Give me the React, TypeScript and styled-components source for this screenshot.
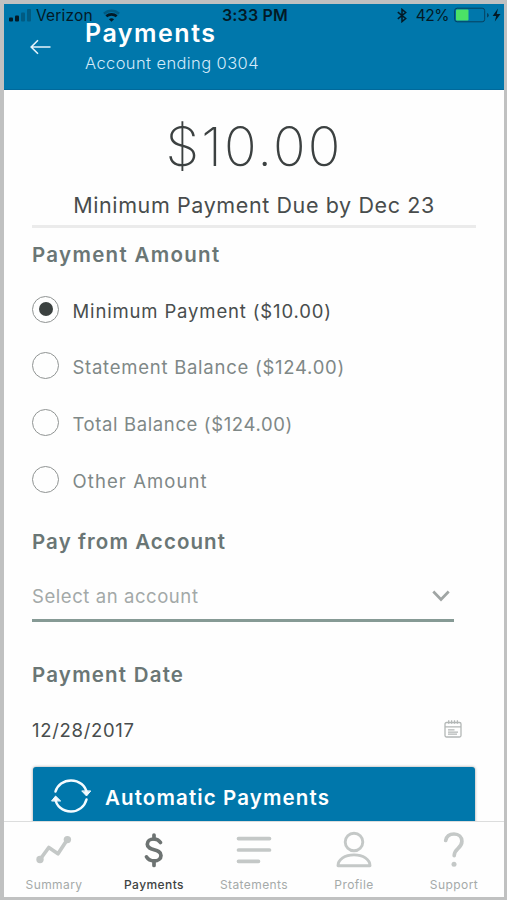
import React, { useState } from "react";
import styled, { createGlobalStyle } from "styled-components";

const GlobalStyle = createGlobalStyle`
  * { box-sizing: border-box; }
  body { margin: 0; background: #c0c1c1; font-family: Inter, "Liberation Sans", sans-serif; }
  h1, h2, p { margin: 0; }
  button { border: 0; background: none; padding: 0; margin: 0; font: inherit; color: inherit; }
  svg { display: block; flex: none; }
`;

const Phone = styled.div`
  position: relative;
  width: 507px;
  height: 900px;
  padding: 4px 3px 3px 4px;
  display: flex;
  flex-direction: column;
  overflow: hidden;
`;

const StatusBar = styled.div`
  position: absolute;
  top: 4px;
  left: 4px;
  width: 500px;
  height: 22px;
  padding: 0 3px 0 5px;
  display: grid;
  grid-template-columns: 1fr auto 1fr;
  align-items: center;
  color: #031a26;
`;

const StatusGroup = styled.div<{ $end?: boolean }>`
  display: flex;
  align-items: center;
  justify-content: ${(p) => (p.$end ? "flex-end" : "flex-start")};
`;

const Carrier = styled.span`
  margin: 0 10px 0 4px;
  font-size: 15.5px;
  letter-spacing: 0.2px;
`;

const Clock = styled.span`
  font-size: 16px;
  font-weight: 600;
  letter-spacing: 0.2px;
`;

const Percent = styled.span`
  margin: 0 5px 0 9px;
  font-size: 15.5px;
  letter-spacing: -0.5px;
`;

const Header = styled.header`
  flex: none;
  height: 86px;
  padding: 12px 0 0 26px;
  display: flex;
  background: #0077ab;
  border-bottom: 1px solid #00699b;
  color: #fff;
`;

const BackButton = styled.button`
  width: 55px;
  height: 62px;
  display: flex;
  align-items: center;
`;

const Title = styled.h1`
  font-size: 25px;
  line-height: 35px;
  font-weight: 600;
  letter-spacing: 1.5px;
`;

const Subtitle = styled.p`
  font-size: 16.5px;
  line-height: 24px;
  font-weight: 300;
  letter-spacing: 0.4px;
  color: #d3eafa;
`;

const Content = styled.main`
  flex: 1;
  min-height: 0;
  overflow: hidden;
  padding: 21px 28px 0;
  background: #fefefe;
`;

const DueSummary = styled.section`
  border-bottom: 3px solid #ebebeb;
  text-align: center;
  color: #3c4141;
`;

const DueAmount = styled.div`
  font-size: 54px;
  line-height: 71px;
  font-weight: 200;
  letter-spacing: 2.1px;
`;

const DueCaption = styled.p`
  padding: 5px 0 2px;
  font-size: 21.5px;
  line-height: 36px;
  letter-spacing: 0.6px;
  color: #484c4c;
`;

const SectionTitle = styled.h2<{ $spacing: number }>`
  font-size: 20.5px;
  line-height: 30px;
  font-weight: 600;
  letter-spacing: ${(p) => p.$spacing}px;
  color: #6a7675;
`;

const AmountSection = styled.section`
  padding-top: 12px;
`;

const Options = styled.div`
  padding-top: 11px;
`;

const Option = styled.label<{ $selected: boolean; $spacing: number }>`
  height: 56.6px;
  display: flex;
  align-items: center;
  gap: 13.5px;
  font-size: 18.5px;
  letter-spacing: ${(p) => p.$spacing}px;
  color: ${(p) => (p.$selected ? "#484d4d" : "#7f8887")};
`;

const OptionText = styled.span`
  padding-top: 3px;
`;

const RadioMark = styled.span`
  width: 27px;
  height: 27px;
  border: 1.5px solid #909493;
  border-radius: 50%;
  display: grid;
  place-items: center;
`;

const RadioDot = styled.span`
  width: 14px;
  height: 14px;
  border-radius: 50%;
  background: #3b4140;
`;

const AccountSection = styled.section`
  padding-top: 20px;
`;

const SelectField = styled.button`
  margin-top: 13px;
  width: 422px;
  height: 52px;
  padding: 3px 4px 0 0;
  display: flex;
  align-items: center;
  justify-content: space-between;
  border-bottom: 3px solid #869a95;
  font-size: 18.5px;
  font-weight: 400;
  letter-spacing: 0.57px;
  color: #a3a9a8;
`;

const DateSection = styled.section`
  padding-top: 38px;
`;

const DateField = styled.div`
  margin-top: 24px;
  height: 31px;
  padding-right: 14px;
  display: flex;
  align-items: center;
  justify-content: space-between;
  font-size: 18.5px;
  letter-spacing: 0.69px;
  color: #484d4d;
`;

const AutoPay = styled.button`
  margin: 22px 1px 0;
  width: 442px;
  height: 62px;
  padding: 0 0 2px 18px;
  display: flex;
  align-items: center;
  gap: 14px;
  border-radius: 3px;
  background: #0077ab;
  box-shadow: 0 0 3px rgba(0, 0, 0, 0.4);
  font-size: 20.5px;
  font-weight: 600;
  letter-spacing: 1.12px;
  color: #fff;
`;

const TabBar = styled.nav`
  flex: none;
  height: 76px;
  display: grid;
  grid-template-columns: repeat(5, 100px);
  background: #fefefe;
  border-top: 1px solid #dcdddd;
`;

const Tab = styled.button<{ $active?: boolean }>`
  display: flex;
  flex-direction: column;
  align-items: center;
  padding-top: 8px;
  font-size: 12px;
  line-height: 18px;
  font-weight: ${(p) => (p.$active ? 500 : 400)};
  letter-spacing: 0.42px;
  color: ${(p) => (p.$active ? "#3e4343" : "#a5aaa9")};
`;

const TabIcon = styled.svg<{ $active?: boolean; $thin?: boolean }>`
  width: 40px;
  height: 40px;
  margin-bottom: 6px;
  fill: none;
  stroke: ${(p) => (p.$active ? "#6d7372" : "#c4c8c7")};
  stroke-width: ${(p) => (p.$thin ? 2.9 : 3.7)};
  stroke-linecap: round;
  stroke-linejoin: round;
`;

const options = [
  { label: "Minimum Payment ($10.00)", spacing: 0.85 },
  { label: "Statement Balance ($124.00)", spacing: 0.74 },
  { label: "Total Balance ($124.00)", spacing: 0.62 },
  { label: "Other Amount", spacing: 1.1 },
];

const tabs = [
  {
    label: "Summary",
    icon: (
      <TabIcon viewBox="0 0 40 40">
        <path d="M6 29.5 14.8 17.5 24 23.8 33.2 9.8" />
        <circle cx="6" cy="29.5" r="3.7" fill="#c4c8c7" stroke="none" />
        <circle cx="33.4" cy="9.6" r="3.7" fill="#c4c8c7" stroke="none" />
      </TabIcon>
    ),
  },
  {
    label: "Payments",
    icon: (
      <TabIcon viewBox="0 0 40 40" $active>
        <path d="M26.5 12.5C24.8 9.9 22.6 9 19.8 9c-3.8 0-6.5 2.1-6.5 5.2 0 7.1 13.7 4 13.7 11.2 0 3.3-2.9 5.5-6.9 5.5-3.5 0-6-1.3-7.6-4" />
        <path d="M20 5v3.8M20 31v4.4" />
      </TabIcon>
    ),
  },
  {
    label: "Statements",
    icon: (
      <TabIcon viewBox="0 0 40 40">
        <path d="M4.5 8.6h31M4.5 20h31M4.5 31.3h20" />
      </TabIcon>
    ),
  },
  {
    label: "Profile",
    icon: (
      <TabIcon viewBox="0 0 40 40" $thin>
        <circle cx="20" cy="12" r="8.8" />
        <path d="M4 35.8h32c0-6.5-7-10.9-16-10.9S4 29.3 4 35.8Z" />
      </TabIcon>
    ),
  },
  {
    label: "Support",
    icon: (
      <TabIcon viewBox="0 0 40 40">
        <path d="M11.7 10.5c.8-4.2 4.1-6.5 8.3-6.5 4.7 0 7.900 3 7.900 7.300 0 3.300-1.500 5.100-4 7.300-2.600 2.300-3.700 3.900-3.700 7" />
        <path d="M20 34.2h.02" strokeWidth="5" />
      </TabIcon>
    ),
  },
];

const SignalIcon = () => (
  <svg width="23" height="13" viewBox="0 0 23 13" fill="#031a26">
    <rect x="0" y="8.5" width="4" height="4" rx="1" />
    <rect x="6" y="6.5" width="4" height="6" rx="1" />
    <rect x="12" y="3.5" width="4" height="9" rx="1" opacity=".3" />
    <rect x="18" y="0" width="4" height="12.5" rx="1" opacity=".3" />
  </svg>
);

const WifiIcon = () => (
  <svg width="17" height="13" viewBox="0 0 17 13" fill="none" stroke="#031a26" strokeWidth="2.6">
    <path d="M1 4.7C5.2.7 11.8.7 16 4.7" opacity=".3" />
    <path d="M3.3 7.3c2.9-2.6 7.5-2.6 10.4 0" />
    <path d="M8.5 12.8 5.9 10.2q2.6-1.8 5.2 0Z" fill="#031a26" stroke="none" />
  </svg>
);

const BluetoothIcon = () => (
  <svg width="10" height="15" viewBox="0 0 10 15" fill="none" stroke="#031a26" strokeWidth="1.5">
    <path d="M.8 4.2 8.7 10.5 5 13.6V1.4l3.7 3.1L.8 10.8" />
  </svg>
);

const BatteryIcon = () => (
  <svg width="47" height="16" viewBox="0 0 47 16">
    <rect x=".7" y="1.2" width="30" height="13.6" rx="2.5" fill="none" stroke="#07405e" strokeWidth="1" />
    <rect x="2" y="2.5" width="12.5" height="11" rx="1" fill="#4be266" />
    <path d="M33 6v4.5q1.8-.5 1.8-2.2T33 6Z" fill="#07405e" />
    <path d="M44 1.5 38.6 9h3.6l-1.400 5.500L46.500 7h-3.800Z" fill="#031a26" />
  </svg>
);

export default function App() {
  const [selected, setSelected] = useState(0);
  return (
    <>
      <GlobalStyle />
      <Phone>
        <Header>
          <BackButton aria-label="Back">
            <svg width="21" height="16" viewBox="0 0 21 16" fill="none" stroke="#e3f3fb" strokeWidth="1.6">
              <path d="M20.5 8H1.5M8 1.2 1.2 8 8 14.8" />
            </svg>
          </BackButton>
          <div>
            <Title>Payments</Title>
            <Subtitle>Account ending 0304</Subtitle>
          </div>
        </Header>
        <StatusBar>
          <StatusGroup>
            <SignalIcon />
            <Carrier>Verizon</Carrier>
            <WifiIcon />
          </StatusGroup>
          <Clock>3:33 PM</Clock>
          <StatusGroup $end>
            <BluetoothIcon />
            <Percent>42%</Percent>
            <BatteryIcon />
          </StatusGroup>
        </StatusBar>
        <Content>
          <DueSummary>
            <DueAmount>$10.00</DueAmount>
            <DueCaption>Minimum Payment Due by Dec 23</DueCaption>
          </DueSummary>
          <AmountSection>
            <SectionTitle $spacing={1.3}>Payment Amount</SectionTitle>
            <Options role="radiogroup">
              {options.map((o, i) => (
                <Option key={o.label} $selected={i === selected} $spacing={o.spacing} onClick={() => setSelected(i)}>
                  <RadioMark>{i === selected && <RadioDot />}</RadioMark>
                  <OptionText>{o.label}</OptionText>
                </Option>
              ))}
            </Options>
          </AmountSection>
          <AccountSection>
            <SectionTitle $spacing={1.08}>Pay from Account</SectionTitle>
            <SelectField>
              Select an account
              <svg width="18" height="12" viewBox="0 0 18 12" fill="none" stroke="#a0a5a4" strokeWidth="2.7">
                <path d="M1.3 1.5 9 9.5l7.7-8" />
              </svg>
            </SelectField>
          </AccountSection>
          <DateSection>
            <SectionTitle $spacing={1.2}>Payment Date</SectionTitle>
            <DateField>
              12/28/2017
              <svg width="18" height="19" viewBox="0 0 18 19" fill="none" stroke="#b3b7b6" strokeWidth="1.3">
                <rect x="1" y="2.5" width="16" height="14.5" rx="1.5" />
                <path d="M1 6.8h16M4.7.3v3.5M7.6.3v3.5M10.5.3v3.5M13.4.3v3.5M4 9.8h6.5M4 12.1h10M4 14.1h9" />
              </svg>
            </DateField>
          </DateSection>
          <AutoPay>
            <svg width="40" height="36" viewBox="0 0 40 36" fill="none" stroke="#f4fbff" strokeWidth="2.5" strokeLinecap="round" strokeLinejoin="round">
              <path d="M4.500 12.500C6.500 6 12.500 1.400 20 1.400c8.200 0 14.800 5.600 15.700 12.600M35.500 20.500C33.700 27.500 27.500 32.500 20 32.500c-8.400 0-15-5.500-15.700-13" />
              <path d="M31 12.200l4.500 4.800 4-4.800Z M.8 21.700l3.800-4.700 4.800 4.700Z" fill="#f4fbff" strokeWidth="1" />
            </svg>
            Automatic Payments
          </AutoPay>
        </Content>
        <TabBar>
          {tabs.map((t) => (
            <Tab key={t.label} $active={t.label === "Payments"}>
              {t.icon}
              {t.label}
            </Tab>
          ))}
        </TabBar>
      </Phone>
    </>
  );
}
